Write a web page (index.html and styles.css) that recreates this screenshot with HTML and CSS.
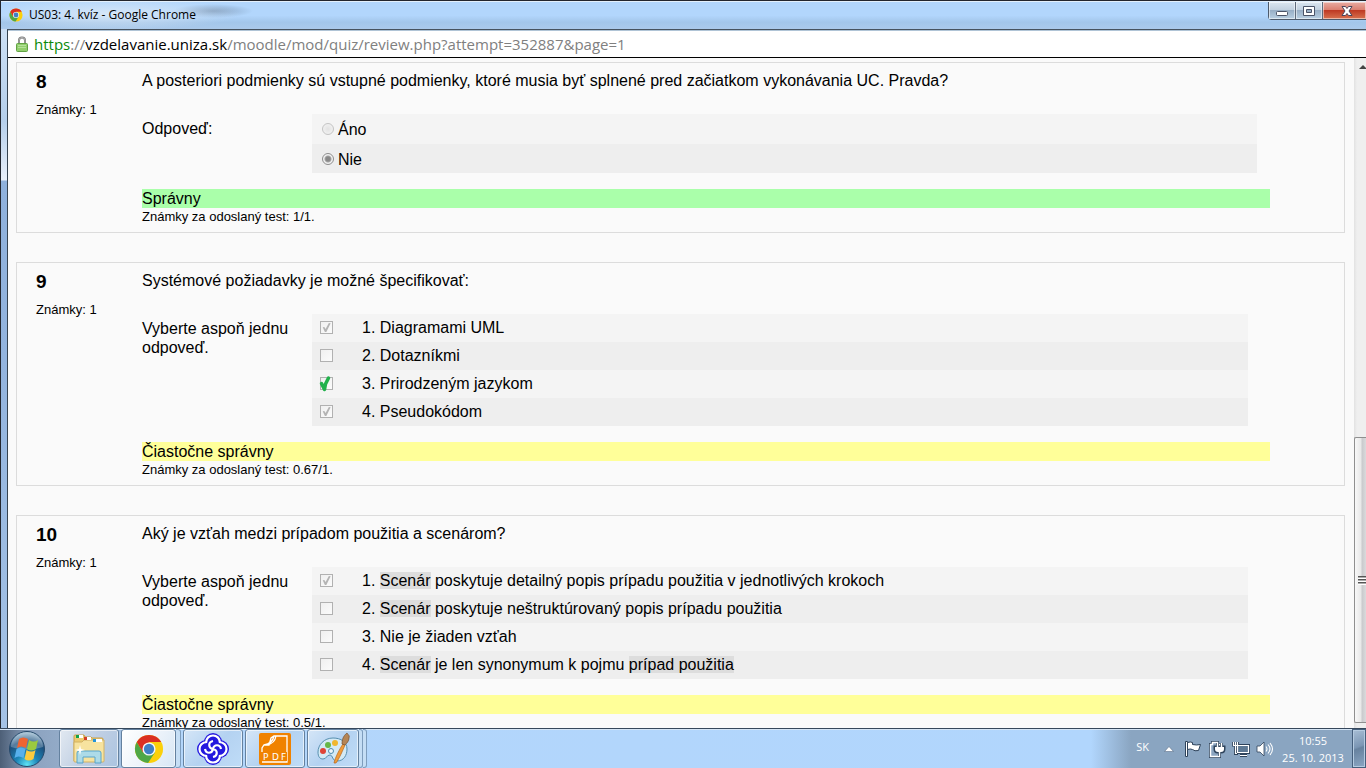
FILE: index.html
```html
<!DOCTYPE html>
<html lang="sk">
<head>
<meta charset="utf-8">
<meta name="viewport" content="width=device-width, initial-scale=1">
<title>US03: 4. kvíz</title>
<link rel="stylesheet" href="styles.css">
</head>
<body class="desktop">
<svg class="defs" width="0" height="0" aria-hidden="true">
  <symbol id="chrome" viewBox="0 0 32 32">
    <circle cx="16" cy="16" r="15" fill="#fbd00b"/>
    <path d="M3 8.500A15 15 0 0 0 15 31L22.500 19.500 16 16 9.500 19.500z" fill="#4fa746"/>
    <path d="M3 8.500A15 15 0 0 1 29 8.500H16L9.500 19.500z" fill="#da2f22"/>
    <circle cx="16" cy="16" r="7" fill="#f4f6f8"/>
    <circle cx="16" cy="16" r="5.500" fill="#3f7fc4"/>
  </symbol>
</svg>
<div class="window">
  <header class="titlebar">
    <svg class="title-icon" width="14" height="14"><use href="#chrome"/></svg>
    <span class="title">US03: 4. kvíz - Google Chrome</span>
    <div class="controls">
      <button class="control" aria-label="Minimalizovať"><svg width="14" height="14"><rect x="1.500" y="7.500" width="11" height="4" rx="1" fill="#fff" stroke="#4b5468"/></svg></button>
      <button class="control" aria-label="Obnoviť"><svg width="14" height="14"><path d="M1.500 2.500h11v9h-11zM4.500 5.500v3h5v-3z" fill="#fff" fill-rule="evenodd" stroke="#4b5468"/></svg></button>
      <button class="control close" aria-label="Zavrieť"><svg width="14" height="14"><path d="M2 2.500h3.500L7 4.500l1.500-2H12L9 7l3 4.500H8.500L7 9.500l-1.500 2H2L5 7z" fill="#fff" stroke="#4b4459"/></svg></button>
    </div>
  </header>
  <div class="frame">
    <div class="address">
      <svg width="12" height="16"><path d="M3 8V4.500a3 3 0 0 1 6 0V8" fill="none" stroke="#777" stroke-width="2"/><path d="M3 8V4.500a3 3 0 0 1 6 0V8" fill="none" stroke="#ccc" stroke-width=".7"/><rect x=".5" y="7.500" width="11" height="8" rx="1" fill="#92ce6d" stroke="#61a244"/><path d="M2 9.500h8M2 11.500h8" stroke="#b4e39a"/></svg>
      <span class="url"><span class="scheme">https</span>://<span class="host">vzdelavanie.uniza.sk</span>/moodle/mod/quiz/review.php?attempt=352887&amp;page=1</span>
    </div>
    <div class="viewport">
      <main class="page">
        <section class="question">
          <div class="info"><h2 class="number">8</h2><p class="marks">Známky: 1</p></div>
          <div class="content">
            <p class="text">A posteriori podmienky sú vstupné podmienky, ktoré musia byť splnené pred začiatkom vykonávania UC. Pravda?</p>
            <div class="answers">
              <p class="prompt">Odpoveď:</p>
              <div class="options truefalse">
                <label class="option"><input class="radio" type="radio" name="q8" disabled>Áno</label>
                <label class="option"><input class="radio" type="radio" name="q8" checked disabled>Nie</label>
              </div>
            </div>
            <p class="result correct">Správny</p>
            <p class="grade">Známky za odoslaný test: 1/1.</p>
          </div>
        </section>
        <section class="question">
          <div class="info"><h2 class="number">9</h2><p class="marks">Známky: 1</p></div>
          <div class="content">
            <p class="text">Systémové požiadavky je možné špecifikovať:</p>
            <div class="answers">
              <p class="prompt">Vyberte aspoň jednu odpoveď.</p>
              <div class="options">
                <label class="option"><input class="check" type="checkbox" checked disabled><span>1. Diagramami UML</span></label>
                <label class="option"><input class="check" type="checkbox" disabled><span>2. Dotazníkmi</span></label>
                <label class="option"><input class="check" type="checkbox" disabled><svg class="pen-mark" width="14" height="18"><path d="M2.500 8.500 5.500 14.500 6.500 9 9.500 3" fill="none" stroke="#22b14c" stroke-width="3.500" stroke-linecap="round" stroke-linejoin="round"/></svg><span>3. Prirodzeným jazykom</span></label>
                <label class="option"><input class="check" type="checkbox" checked disabled><span>4. Pseudokódom</span></label>
              </div>
            </div>
            <p class="result partial">Čiastočne správny</p>
            <p class="grade">Známky za odoslaný test: 0.67/1.</p>
          </div>
        </section>
        <section class="question">
          <div class="info"><h2 class="number">10</h2><p class="marks">Známky: 1</p></div>
          <div class="content">
            <p class="text">Aký je vzťah medzi prípadom použitia a scenárom?</p>
            <div class="answers">
              <p class="prompt">Vyberte aspoň jednu odpoveď.</p>
              <div class="options">
                <label class="option"><input class="check" type="checkbox" checked disabled><span>1. <a class="term">Scenár</a> poskytuje detailný popis prípadu použitia v jednotlivých krokoch</span></label>
                <label class="option"><input class="check" type="checkbox" disabled><span>2. <a class="term">Scenár</a> poskytuje neštruktúrovaný popis prípadu použitia</span></label>
                <label class="option"><input class="check" type="checkbox" disabled><span>3. Nie je žiaden vzťah</span></label>
                <label class="option"><input class="check" type="checkbox" disabled><span>4. <a class="term">Scenár</a> je len synonymum k pojmu <a class="term">prípad použitia</a></span></label>
              </div>
            </div>
            <p class="result partial">Čiastočne správny</p>
            <p class="grade">Známky za odoslaný test: 0.5/1.</p>
          </div>
        </section>
      </main>
      <div class="scrollbar">
        <svg class="arrow" width="7" height="4"><path d="M0 4 4 0l4 4z" fill="#444"/></svg>
        <div class="thumb"><i class="grip"></i></div>
      </div>
    </div>
  </div>
</div>
<footer class="taskbar">
  <button class="start" aria-label="Štart">
    <svg width="38" height="38" viewBox="0 0 38 38">
      <defs><radialGradient id="orb" cx=".5" cy=".95" r=".9"><stop offset="0" stop-color="#5fe3f5"/><stop offset=".35" stop-color="#1c86b8"/><stop offset=".75" stop-color="#1d4f7c"/><stop offset="1" stop-color="#8eb0c8"/></radialGradient></defs>
      <circle cx="19" cy="19" r="17.500" fill="url(#orb)" stroke="#26496b"/>
      <path d="M3 17a16 15 0 0 1 32 0q-16 5-32 0z" fill="#fff" opacity=".25"/>
      <path d="M11 9q4-3 9 0l-2 9q-5-3-9 0z" fill="#ee6432"/>
      <path d="M21 10q5 3 9 0l-2 9q-5 3-9 0z" fill="#9bc93f"/>
      <path d="M8.500 19q4-3 9 0l-2 9q-5-3-9 0z" fill="#57b0ec"/>
      <path d="M18.500 20q5 3 9 0l-2 9q-5 3-9 0z" fill="#fbcb3e"/>
    </svg>
  </button>
  <nav class="tasks">
    <button class="task pale" aria-label="Prieskumník">
      <svg width="34" height="32" viewBox="0 0 34 32">
        <path d="M2 28V3q0-1 1-1h9l1 2h6l1 1h10q1 0 1 1v22z" fill="#eccb72" stroke="#c5a04c"/>
        <path d="M2 9h8l2-2h20v21q0 1-1 1H3q-1 0-1-1z" fill="#f7e39f" stroke="#d2b265"/>
        <path d="M5 3.500h6M13 5.500h6M21 7.500h9" stroke="#fff" stroke-width="3"/>
        <path d="M4 3.500h3" stroke="#10a24b" stroke-width="3"/><path d="M12 5.500h3" stroke="#d43e27" stroke-width="3"/><path d="M21 7.500h3" stroke="#2494d8" stroke-width="3"/>
        <path d="M5 30V20q0-2 2-2h20q2 0 2 2v10h-6v-6H11v6z" fill="#a4d9ef" fill-opacity=".9" stroke="#58a5cb"/>
        <path d="m8 12 1 4 4 1-4 1-1 4-1-4-4-1 4-1z" fill="#fff"/>
      </svg>
    </button>
    <div class="stack">
      <button class="task active" aria-label="Google Chrome"><svg width="30" height="30"><use href="#chrome"/></svg></button>
      <i class="sheet"></i>
    </div>
    <button class="task" aria-label="Aplikácia">
      <svg width="34" height="34" viewBox="0 0 34 34">
        <g fill="#2418df"><circle cx="17" cy="10" r="9"/><circle cx="24" cy="17" r="9"/><circle cx="17" cy="24" r="9"/><circle cx="10" cy="17" r="9"/></g>
        <g fill="none" stroke="#fff" stroke-width="2.200">
          <path d="M10 11c0-10 14-10 14 0"/><path d="M23 10c10 0 10 14 0 14"/><path d="M24 23c0 10-14 10-14 0"/><path d="M11 24c-10 0-10-14 0-14"/>
          <path d="M17 17c-5-1-5-7 0-8M17 17c1-5 7-5 8 0M17 17c5 1 5 7 0 8M17 17c-1 5-7 5-8 0"/>
        </g>
      </svg>
    </button>
    <button class="task" aria-label="PDF">
      <svg width="32" height="32" viewBox="0 0 32 32">
        <rect width="32" height="32" rx="2" fill="#f08200"/>
        <path d="M3 19v-4l2-3h5l2-7 3-2h13v26H3M5 12c6-1 9-4 10-9M8 12c5-1 8-3 9-9" fill="none" stroke="#fff" stroke-width="1.300"/>
        <path d="M3 19h25v9H3z" fill="#f08200"/>
        <text class="pdf" x="4" y="27">P</text><text class="pdf" x="13" y="27">D</text><text class="pdf" x="22" y="27">F</text>
      </svg>
    </button>
    <div class="stack">
      <button class="task" aria-label="Skicár">
        <svg width="34" height="34" viewBox="0 0 34 34">
          <path d="M17 6C8 6 2 13 2 20c0 5 2 7 5 7 4 0 3-4 7-4 3 0 2 6 7 6 7 0 10-6 10-12 0-7-6-11-14-11z" fill="#d4eaf5" stroke="#568faf"/>
          <circle cx="7" cy="19" r="3" fill="#df4437"/><circle cx="12" cy="13" r="3" fill="#66b748"/><circle cx="19" cy="11" r="3" fill="#f0b72e"/><circle cx="15" cy="19" r="2.500" fill="#eef6fb" stroke="#4c8bb0"/>
          <path d="M18 31c1-5 6-15 9-19l2 1c-2 5-6 14-9 18z" fill="#f19c3a" stroke="#b8651b" stroke-width=".7"/>
          <path d="M26 12c0-4 1-8 5-11 1 2 3 2 2 5 0 3-2 5-4 7z" fill="#b58555" stroke="#76502f" stroke-width=".7"/>
        </svg>
      </button>
      <i class="sheet"></i><i class="sheet"></i>
    </div>
  </nav>
  <div class="tray">
    <span class="lang">SK</span>
    <svg class="more" width="10" height="6"><path d="M.5 5.500 5 .5l4.500 5z" fill="#fff" stroke="#5c7189" stroke-width=".6"/></svg>
    <svg width="18" height="18" viewBox="0 0 18 18"><path d="M1.500 1.500h2v15h-2z" fill="#fff" stroke="#2e435b"/><path d="M3.500 2.500q3-1 5 0v2q4 1 8 0l-2 6q-4 1-6-1-2-1-5 0z" fill="#fff" stroke="#2e435b"/></svg>
    <svg width="18" height="18" viewBox="0 0 18 18"><path d="M2.500 4.500h2v-2h5v2h2v12h-9z" fill="none" stroke="#2e435b" stroke-width="3"/><path d="M2.500 4.500h2v-2h5v2h2v12h-9z" fill="#8ba5c0" stroke="#fff" stroke-width="1.500"/><path d="M9.500 3v4M13.500 3v4M7 7h9v2q0 3-3 3h-3q-3 0-3-3zM11.500 12v4" fill="none" stroke="#2e435b" stroke-width="3"/><path d="M9.500 3v4M13.500 3v4M11.500 12v4" stroke="#fff" stroke-width="1.500"/><path d="M7 7h9v2q0 3-3 3h-3q-3 0-3-3z" fill="#fff"/></svg>
    <svg width="18" height="18" viewBox="0 0 18 18"><path d="M5.500 5.500h11v7h-11zM8 15.500h7M3.500 7v6.500H6M1.500 2v3h4V2M3.500 2v5" fill="none" stroke="#2e435b" stroke-width="3"/><path d="M5.500 5.500h11v7h-11z" fill="#5d7893" stroke="#fff" stroke-width="1.200"/><path d="M8 15.500h7M3.500 6v7.500H5M1.500 2v3.500h4V2M3.500 2v4" fill="none" stroke="#fff" stroke-width="1.200"/></svg>
    <svg width="18" height="18" viewBox="0 0 18 18"><path d="M1 6h3l4-4v14l-4-4H1z" fill="#fff" stroke="#2e435b" stroke-width=".8"/><path d="M10 6.500q2 2.500 0 5M12 4.500q4 4.500 0 9M14 3q5 6 0 12" fill="none" stroke="#fff" stroke-width="1.100"/></svg>
    <time class="clock" datetime="2013-10-25T10:55"><span>10:55</span><span>25. 10. 2013</span></time>
    <button class="peek" aria-label="Zobraziť pracovnú plochu"></button>
  </div>
</footer>
</body>
</html>
```
FILE: styles.css
```css
* { box-sizing: border-box; }

.desktop {
  display: flex;
  flex-direction: column;
  height: 100vh;
  margin: 0;
  overflow: hidden;
  background: #fafafa;
  color: #000;
  font: 16px/19px "Liberation Sans", Arial, sans-serif;
}

.defs { position: absolute; }
h2, p { margin: 0; }
button { margin: 0; padding: 0; border: 0; background: none; }

/* Window chrome */
.window {
  display: flex;
  flex: 1;
  flex-direction: column;
  min-height: 0;
  border-top: 1px solid #23262e;
  border-left: 1px solid #23262e;
  background: linear-gradient(#d3e4f7, #b5cfeb 120px, #e9f0fa 179px, #8fb1dc 180px, #93b4de 360px, #a5c3e6);
}

.titlebar {
  display: flex;
  flex: none;
  align-items: flex-start;
  gap: 6px;
  height: 28px;
  padding-left: 8px;
  border-top: 1px solid #e3f0fc;
  background:
    radial-gradient(ellipse 130px 16px at 110px 12px, #dfeaf5cc, #dfeaf500),
    radial-gradient(ellipse 40px 7px at 212px 9px, #6f88a5aa, #6f88a500),
    linear-gradient(#b2d6fc 0 50%, #a3c6ea 75%, #abcaeb);
}

.title-icon { margin-top: 6px; }
.title { flex: 1; padding-top: 4px; font: 12px/17px "Open Sans", sans-serif; }

.controls { display: flex; border: 1px solid #4d5a6b; border-top: 0; border-right: 0; border-radius: 0 0 0 4px; }
.control {
  display: grid;
  place-items: center;
  width: 27px;
  height: 17px;
  border-right: 1px solid #5e6b7c;
  background: linear-gradient(#dbe6f0, #c0cfde 50%, #98afc6 50%, #b9d0e3);
  box-shadow: inset 0 0 0 1px #ffffff80;
}
.close { width: 43px; padding-left: 4px; border-right: 0; background: linear-gradient(#e8aca3, #d97b6c 50%, #be3a24 50%, #d8724f); }

.frame {
  display: flex;
  flex: 1;
  flex-direction: column;
  min-height: 0;
  margin-left: 6px;
  border-top: 1px solid #47535f;
  border-left: 1px solid #35424f;
}

.address {
  display: flex;
  flex: none;
  align-items: center;
  gap: 6px;
  height: 28px;
  padding-left: 8px;
  border-top: 1px solid #b0c4d6;
  border-bottom: 1px solid #000;
  background: #fff;
}
.url { color: #808080; font: 15px/22px "Open Sans", sans-serif; white-space: nowrap; }
.scheme { color: #0b8a0b; }
.host { color: #000; }

.viewport { display: flex; flex: 1; min-height: 0; }

/* Quiz */
.page {
  display: flex;
  flex: 1;
  flex-direction: column;
  gap: 29px;
  min-width: 0;
  padding: 4px 9px 0 8px;
  overflow: hidden;
  background: #fafafa;
}

.question {
  display: grid;
  flex: none;
  grid-template-columns: 106px 1fr;
  padding: 8px 74px 7px 19px;
  border: 1px solid #dcdcdc;
}

.number { margin-bottom: 8px; font-size: 19px; line-height: 22px; }
.marks, .grade { font-size: 13px; line-height: 17px; }
.text { margin-bottom: 24px; }
.answers { display: grid; grid-template-columns: 170px 1fr; margin-bottom: 16px; }
.prompt { padding: 5px 20px 0 0; }
.options { margin-right: 22px; }

.option {
  position: relative;
  display: flex;
  align-items: center;
  gap: 29px;
  height: 28px;
  padding: 0 0 1px 8px;
  background: #f4f4f4;
}
.option:nth-child(even) { background: #eee; }
.truefalse { margin-right: 13px; }
.truefalse .option { gap: 4px; height: 30px; padding: 0 0 0 10px; }
.truefalse .option:last-child { height: 29px; padding-top: 1px; }

.check, .radio { flex: none; margin: 0; appearance: none; }
.check {
  display: grid;
  place-items: center;
  width: 13px;
  height: 13px;
  border: 1px solid #b1b1b1;
  background: linear-gradient(135deg, #f0f0f0, #fbfbfb);
}
.check:checked::after {
  width: 9px;
  height: 9px;
  background: #b4b4b4;
  clip-path: polygon(8% 48%, 26% 45%, 40% 66%, 76% 0, 96% 4%, 48% 100%, 32% 100%);
  content: "";
}
.radio {
  width: 12px;
  height: 12px;
  border: 1px solid #c4c4c4;
  border-radius: 50%;
  background: radial-gradient(#e2e2e2, #f6f6f6);
}
.radio:checked {
  border-color: #8e8e8e;
  background: radial-gradient(circle, #888 0 2px, #a5a5a5 3px, #f2f2f2 4px);
}
.pen-mark { position: absolute; left: 7px; top: 5px; }
.term { background: #ddd; }

.correct { background: #afa; }
.partial { background: #ff9; }

.scrollbar {
  display: flex;
  flex: none;
  flex-direction: column;
  justify-content: space-between;
  width: 12px;
  padding-bottom: 5px;
  background: linear-gradient(90deg, #e2e2e2, #efefef 3px);
}
.arrow { margin: 7px 0 0 5px; }
.thumb {
  display: grid;
  place-items: center end;
  height: 43%;
  border: 1px solid #8f8f8f;
  border-right: 0;
  border-radius: 2px 0 0 2px;
  background: linear-gradient(90deg, #f8f8f8, #e8e8e8 6px, #c9c9cc 7px, #dadadc);
}
.grip { width: 8px; height: 9px; background: repeating-linear-gradient(#555 0 1px, #aaa 1px 2px, #fff 2px 3px); }

/* Taskbar */
.taskbar {
  display: flex;
  flex: none;
  height: 40px;
  border-top: 1px solid #36475b;
  background: linear-gradient(90deg, #4d5f77, #8ba1be 30px, #93abc8 60px, #b3d6fb 180px, #b1d6fd calc(100% - 275px), #8aa5c1 calc(100% - 235px));
  box-shadow: inset 0 1px #d5e5f5;
}
.start { display: grid; place-items: center; width: 59px; padding-right: 6px; }
.tasks { display: flex; flex: 1; gap: 2px; }
.task {
  display: grid;
  place-items: center;
  width: 60px;
  height: 39px;
  border: 1px solid #64819f;
  border-radius: 3px;
  background: linear-gradient(135deg, #d5e6f7, #b4d2f1 50%, #bfdcf7);
  box-shadow: inset 0 0 0 1px #ffffff99;
}
.pale { background: linear-gradient(120deg, #e2e9f1, #c0cfe3 50%, #abc4e1); }
.active { background: linear-gradient(120deg, #fff, #e9f1f9 60%, #d6e6f5); }
.stack { display: flex; width: 60px; }
.stack .task { flex: none; width: 55px; }
.stack .task:has(+ .sheet + .sheet) { width: 52px; }
.sheet { width: 5px; border: 1px solid #7e9dbd; border-left: 0; border-radius: 0 3px 3px 0; background: #c5def5; }
.pdf { fill: #fff; font: 9px "DejaVu Sans", sans-serif; }

.tray { display: flex; align-items: center; gap: 6px; color: #fff; font: 11px/17px "Open Sans", sans-serif; }
.lang { margin: 0 9px 5px 0; }
.tray svg { flex: none; }
.tray .more { margin-right: 4px; }
.clock { display: flex; flex-direction: column; width: 66px; text-align: center; white-space: nowrap; }
.peek {
  align-self: stretch;
  width: 14px;
  border: 1px solid #455f7c;
  background: linear-gradient(160deg, #a8bed5, #7b96b4 45%, #67829f 50%, #8ba6c3);
  box-shadow: inset 0 0 0 1px #b5cbe0;
}
```
